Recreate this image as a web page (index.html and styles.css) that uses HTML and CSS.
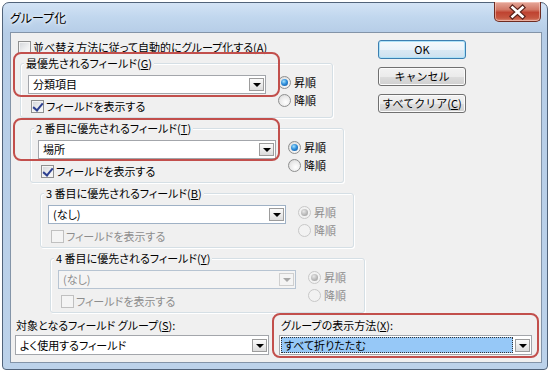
FILE: index.html
```html
<!DOCTYPE html>
<html lang="ja">
<head>
  <meta charset="UTF-8">
  <link rel="stylesheet" href="styles.css">
</head>
<body>
  <div class="window">
    <div class="titlebar">
      <span class="title">グループ化</span>
      <span class="close">
        <svg width="45" height="18" viewBox="0 0 45 18">
          <path d="M17.5 4.5 L27.5 13.5 M27.5 4.5 L17.5 13.5" stroke="#5a231b" stroke-width="5" stroke-linecap="square"/>
          <path d="M17.5 4.5 L27.5 13.5 M27.5 4.5 L17.5 13.5" stroke="#ffffff" stroke-width="2.6" stroke-linecap="square"/>
        </svg>
      </span>
    </div>

    <div class="client">
      <div class="top">
        <div class="options">
          <label class="check auto"><span class="box"></span>並べ替え方法に従って自動的にグループ化する(A)</label>

          <div class="group g1">
            <div class="legend">最優先されるフィールド(<u>G</u>)</div>
            <div class="group-body">
              <div class="field-col">
                <div class="combo"><span class="value">分類項目</span><span class="drop"></span></div>
                <label class="check"><span class="box checked"></span>フィールドを表示する</label>
              </div>
              <div class="radios">
                <label class="radio"><span class="dot on"></span>昇順</label>
                <label class="radio"><span class="dot"></span>降順</label>
              </div>
            </div>
          </div>

          <div class="group g2">
            <div class="legend">2 番目に優先されるフィールド(<u>T</u>)</div>
            <div class="group-body">
              <div class="field-col">
                <div class="combo"><span class="value">場所</span><span class="drop"></span></div>
                <label class="check"><span class="box checked"></span>フィールドを表示する</label>
              </div>
              <div class="radios">
                <label class="radio"><span class="dot on"></span>昇順</label>
                <label class="radio"><span class="dot"></span>降順</label>
              </div>
            </div>
          </div>

          <div class="group g3">
            <div class="legend">3 番目に優先されるフィールド(<u>B</u>)</div>
            <div class="group-body">
              <div class="field-col">
                <div class="combo blue"><span class="value">(なし)</span><span class="drop"></span></div>
                <label class="check disabled"><span class="box"></span>フィールドを表示する</label>
              </div>
              <div class="radios disabled">
                <label class="radio"><span class="dot on"></span>昇順</label>
                <label class="radio"><span class="dot"></span>降順</label>
              </div>
            </div>
          </div>

          <div class="group g4">
            <div class="legend">4 番目に優先されるフィールド(<u>Y</u>)</div>
            <div class="group-body">
              <div class="field-col">
                <div class="combo disabled"><span class="value">(なし)</span><span class="drop"></span></div>
                <label class="check disabled"><span class="box"></span>フィールドを表示する</label>
              </div>
              <div class="radios disabled">
                <label class="radio"><span class="dot on"></span>昇順</label>
                <label class="radio"><span class="dot"></span>降順</label>
              </div>
            </div>
          </div>
        </div>

        <div class="buttons">
          <button class="btn default">OK</button>
          <button class="btn">キャンセル</button>
          <button class="btn">すべてクリア(<u>C</u>)</button>
        </div>
      </div>

      <div class="bottom">
        <div class="field left">
          <div class="field-label">対象となるフィールド グループ(<u>S</u>):</div>
          <div class="combo"><span class="value">よく使用するフィールド</span><span class="drop"></span></div>
        </div>
        <div class="field right">
          <div class="field-label">グループの表示方法(<u>X</u>):</div>
          <div class="combo"><span class="value selected">すべて折りたたむ</span><span class="drop"></span></div>
        </div>
      </div>

      <div class="mark m1"></div>
      <div class="mark m2"></div>
      <div class="mark m3"></div>
    </div>
  </div>
</body>
</html>
```

FILE: styles.css
```css
* {
  box-sizing: border-box;
}

body {
  margin: 0;
  background-color: #ffffff;
  font-family: "Noto Sans CJK JP", "Noto Sans", sans-serif;
  font-size: 11px;
  font-feature-settings: "palt" 1;
  color: #000;
}

u {
  text-decoration: underline;
  text-underline-offset: 1px;
}

/* window frame */
.window {
  margin: 2px 0 0 2px;
  width: 546px;
  height: 368px;
  border: 1px solid #51637a;
  border-radius: 7px 7px 4px 4px;
  background: linear-gradient(180deg, #d3e3f5 0, #c1d7ee 14px, #b6cde7 30px, #bcd2ea 100%);
  padding: 0 5px 6px 7px;
  display: flex;
  flex-direction: column;
}

.titlebar {
  height: 29px;
  display: flex;
  align-items: center;
  justify-content: space-between;
}

.title {
  font-size: 12px;
  line-height: 14px;
  text-shadow: 0 0 6px #ffffff, 0 0 3px #ffffff;
}

.close {
  align-self: flex-start;
  margin: -1px 1px 0 0;
  width: 47px;
  height: 20px;
  border: 1px solid #6e2c22;
  border-top: none;
  border-radius: 0 0 5px 5px;
  background: linear-gradient(180deg, #e6a89a 0, #d27866 40%, #bf4331 55%, #c65842 85%, #dc8e7a 100%);
  box-shadow: inset 0 0 0 1px rgba(255, 220, 210, 0.5);
  display: flex;
  align-items: center;
  justify-content: center;
}

.client {
  position: relative;
  flex: 1;
  border: 1px solid #8394a8;
  background-color: #f0f0f0;
}

.top {
  display: flex;
}

.options {
  width: 367px;
  padding: 7px 0 0 7px;
}

.buttons {
  width: 88px;
  padding-top: 7px;
  display: flex;
  flex-direction: column;
  gap: 8px;
}

/* buttons */
.btn {
  height: 19px;
  padding: 0;
  border: 1px solid #707070;
  border-radius: 3px;
  background: linear-gradient(180deg, #f2f2f2 0%, #ebebeb 50%, #dddddd 51%, #cfcfcf 100%);
  box-shadow: inset 0 0 0 1px #fbfbfb;
  font-family: inherit;
  font-size: 11px;
  line-height: 15px;
  white-space: nowrap;
  color: #000;
}

.btn.default {
  border-color: #3c7fb1;
  background: linear-gradient(180deg, #f4f9fc 0%, #eaf3fa 50%, #dbe9f4 51%, #cde1f0 100%);
  box-shadow: inset 0 0 0 1px #aee2f8;
}

/* checkboxes */
.check {
  display: flex;
  align-items: center;
  gap: 2px;
  height: 14px;
  line-height: 14px;
  white-space: nowrap;
}

.box {
  width: 13px;
  height: 13px;
  border: 1px solid #8e8f8f;
  background: linear-gradient(135deg, #d2d5d9 0%, #eeeff0 60%, #fafafa 100%);
  box-shadow: inset 0 0 0 1px #f4f4f4;
  position: relative;
  flex: none;
}

.box.checked::after {
  content: "";
  position: absolute;
  left: 3px;
  top: 0px;
  width: 4px;
  height: 8px;
  border: solid #2c3f8f;
  border-width: 0 2px 2px 0;
  transform: rotate(40deg);
}

.check.disabled {
  color: #8d8d8d;
}

.check.disabled .box {
  border-color: #c0c0c0;
  background: #f4f4f4;
  box-shadow: none;
}

/* group boxes */
.group {
  border: 1px solid #d5dfe5;
  border-radius: 3px;
  padding: 0 3px 4px 7px;
  box-shadow: inset 1px 1px 0 #ffffff, 1px 1px 0 #ffffff;
}

.g1 { margin: 9px 0 0 2px; width: 313px; }
.g2 { margin: 10px 0 0 12px; width: 314px; }
.g3 { margin: 10px 0 0 22px; width: 314px; }
.g4 { margin: 10px 0 0 32px; width: 315px; }

.legend {
  margin: -7px 0 0 -4px;
  padding: 0 2px;
  width: fit-content;
  height: 13px;
  line-height: 13px;
  background-color: #f0f0f0;
  white-space: nowrap;
}

.group-body {
  display: flex;
  margin-top: 5px;
}

.field-col {
  width: 238px;
  display: flex;
  flex-direction: column;
  gap: 5px;
}

.field-col .check {
  margin-left: 3px;
}

/* combo boxes */
.combo {
  height: 19px;
  border: 1px solid #a3a6ab;
  background-color: #ffffff;
  display: flex;
  align-items: center;
  justify-content: space-between;
  padding: 0 1px 0 4px;
}

.combo.blue {
  border-color: #9fb1c5;
}

.combo .value {
  line-height: 15px;
  white-space: nowrap;
}

.drop {
  width: 15px;
  height: 13px;
  border: 1px solid #9c9c9c;
  background: linear-gradient(180deg, #fbfbfb 0%, #ececec 50%, #dcdcdc 100%);
  position: relative;
  flex: none;
}

.drop::after {
  content: "";
  position: absolute;
  left: 3px;
  top: 4px;
  border-style: solid;
  border-width: 4px 4px 0 4px;
  border-color: #000 transparent transparent transparent;
}

.combo.disabled {
  border-color: #b7c4d2;
  background-color: #f4f4f4;
  color: #8d8d8d;
}

.combo.disabled .drop {
  border-color: #cfcfcf;
  background: #f4f4f4;
}

.combo.disabled .drop::after {
  border-top-color: #a8a8a8;
}

/* radios */
.radios {
  margin: -2px 0 0 12px;
  display: flex;
  flex-direction: column;
}

.radio {
  height: 18px;
  display: flex;
  align-items: center;
  gap: 3px;
  white-space: nowrap;
}

.dot {
  width: 13px;
  height: 13px;
  border-radius: 50%;
  border: 1px solid #8e8f8f;
  background: radial-gradient(circle at 60% 65%, #ffffff 0%, #eaeaea 55%, #d0d0d0 100%);
  position: relative;
  flex: none;
}

.dot.on::after {
  content: "";
  position: absolute;
  left: 2px;
  top: 2px;
  width: 7px;
  height: 7px;
  border-radius: 50%;
  background: radial-gradient(circle at 40% 35%, #a9e3fb 0%, #2f8fdc 45%, #0e4d93 100%);
}

.radios.disabled {
  color: #8d8d8d;
}

.radios.disabled .dot {
  border-color: #c8c8c8;
  background: #f2f2f2;
}

.radios.disabled .dot.on::after {
  background: radial-gradient(circle at 40% 35%, #e8e8e8 0%, #b4b4b4 60%, #9a9a9a 100%);
}

/* bottom fields */
.bottom {
  display: flex;
  gap: 10px;
  padding-left: 4px;
  margin-top: 5px;
}

.field {
  display: flex;
  flex-direction: column;
  gap: 3px;
}

.field.left { width: 254px; }
.field.right { width: 253px; }

.field-label {
  line-height: 14px;
  padding-left: 1px;
  white-space: nowrap;
}

.field.right .field-label {
  padding-left: 2px;
}

.field .combo {
  height: 20px;
}

.combo .selected {
  flex: 1;
  margin: 0 2px 0 -3px;
  padding-left: 2px;
  height: 16px;
  line-height: 14px;
  background-color: #96c8f7;
  border: 1px dotted #333;
}

/* red annotation marks */
.mark {
  position: absolute;
  border: 2px solid #c24f4c;
  border-radius: 8px;
}

.m1 { left: 2px; top: 19px; width: 267px; height: 45px; }
.m2 { left: 2px; top: 85px; width: 267px; height: 43px; }
.m3 { left: 261px; top: 280px; width: 267px; height: 45px; }
```
